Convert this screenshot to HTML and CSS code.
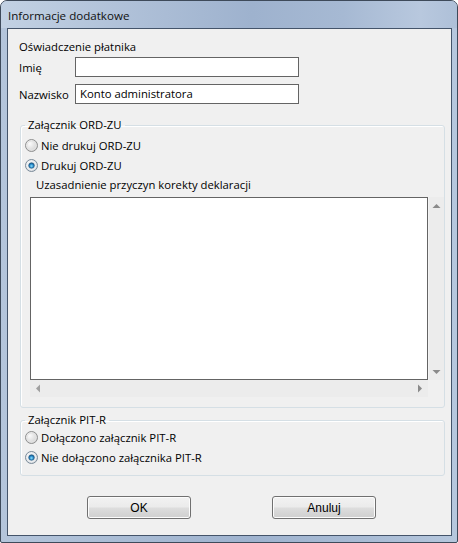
FILE: index.html
```html
<!DOCTYPE html>
<html lang="pl">
<head>
<meta charset="utf-8">
<title>Informacje dodatkowe</title>
<link rel="stylesheet" href="styles.css">
</head>
<body>
<div class="window">
  <div class="titlebar"><span class="title">Informacje dodatkowe</span></div>
  <div class="client">
    <div class="section-title">Oświadczenie płatnika</div>
    <div class="field-row">
      <span class="field-label">Imię</span>
      <div class="input"></div>
    </div>
    <div class="field-row field-row-2">
      <span class="field-label">Nazwisko</span>
      <div class="input">Konto administratora</div>
    </div>

    <fieldset class="group group-ord">
      <legend class="group-legend">Załącznik ORD-ZU</legend>
      <div class="radio-row radio-first">
        <svg class="radio" width="13" height="13" viewBox="0 0 13 13">
          <defs>
            <radialGradient id="rg1" cx="0.35" cy="0.35" r="0.75">
              <stop offset="0" stop-color="#fbfbfb"/>
              <stop offset="1" stop-color="#cfcfcf"/>
            </radialGradient>
          </defs>
          <circle cx="6.5" cy="6.5" r="6" fill="url(#rg1)" stroke="#8e8f8f" stroke-width="1"/>
          <circle cx="6.5" cy="6.5" r="4.5" fill="none" stroke="#e4e4e4" stroke-width="1"/>
        </svg>
        <span>Nie drukuj ORD-ZU</span>
      </div>
      <div class="radio-row">
        <svg class="radio" width="13" height="13" viewBox="0 0 13 13">
          <defs>
            <radialGradient id="rg2" cx="0.35" cy="0.35" r="0.75">
              <stop offset="0" stop-color="#fbfbfb"/>
              <stop offset="1" stop-color="#d2d6da"/>
            </radialGradient>
            <radialGradient id="dot1" cx="0.5" cy="0.6" r="0.6">
              <stop offset="0" stop-color="#8fe0fb"/>
              <stop offset="0.55" stop-color="#2a8ccc"/>
              <stop offset="1" stop-color="#0f4a78"/>
            </radialGradient>
          </defs>
          <circle cx="6.5" cy="6.5" r="6" fill="url(#rg2)" stroke="#7a8b99" stroke-width="1"/>
          <circle cx="6.5" cy="6.5" r="4.3" fill="none" stroke="#eef1f4" stroke-width="1"/>
          <circle cx="6.5" cy="6.5" r="2.8" fill="url(#dot1)" stroke="#24587f" stroke-width="0.6"/>
        </svg>
        <span>Drukuj ORD-ZU</span>
      </div>
      <div class="textarea-label">Uzasadnienie przyczyn korekty deklaracji</div>
      <div class="scroll-pane">
        <div class="pane-top">
          <div class="text-box"></div>
          <div class="vscroll">
            <svg class="arrow" width="9" height="6" viewBox="0 0 9 6"><path d="M0.5 5 L4.5 1 L8.5 5 Z" fill="#8a8a8a"/></svg>
            <svg class="arrow" width="9" height="6" viewBox="0 0 9 6"><path d="M0.5 1 L4.5 5 L8.5 1 Z" fill="#8a8a8a"/></svg>
          </div>
        </div>
        <div class="hscroll">
          <svg class="arrow" width="6" height="9" viewBox="0 0 6 9"><path d="M5 0.5 L1 4.5 L5 8.5 Z" fill="#a0a0a0"/></svg>
          <svg class="arrow" width="6" height="9" viewBox="0 0 6 9"><path d="M1 0.5 L5 4.5 L1 8.5 Z" fill="#8a8a8a"/></svg>
        </div>
      </div>
    </fieldset>

    <fieldset class="group group-pit">
      <legend class="group-legend">Załącznik PIT-R</legend>
      <div class="radio-row radio-first-pit">
        <svg class="radio" width="13" height="13" viewBox="0 0 13 13">
          <defs>
            <radialGradient id="rg3" cx="0.35" cy="0.35" r="0.75">
              <stop offset="0" stop-color="#fbfbfb"/>
              <stop offset="1" stop-color="#cfcfcf"/>
            </radialGradient>
          </defs>
          <circle cx="6.5" cy="6.5" r="6" fill="url(#rg3)" stroke="#8e8f8f" stroke-width="1"/>
          <circle cx="6.5" cy="6.5" r="4.5" fill="none" stroke="#e4e4e4" stroke-width="1"/>
        </svg>
        <span>Dołączono załącznik PIT-R</span>
      </div>
      <div class="radio-row">
        <svg class="radio" width="13" height="13" viewBox="0 0 13 13">
          <defs>
            <radialGradient id="rg4" cx="0.35" cy="0.35" r="0.75">
              <stop offset="0" stop-color="#fbfbfb"/>
              <stop offset="1" stop-color="#d2d6da"/>
            </radialGradient>
            <radialGradient id="dot2" cx="0.5" cy="0.6" r="0.6">
              <stop offset="0" stop-color="#8fe0fb"/>
              <stop offset="0.55" stop-color="#2a8ccc"/>
              <stop offset="1" stop-color="#0f4a78"/>
            </radialGradient>
          </defs>
          <circle cx="6.5" cy="6.5" r="6" fill="url(#rg4)" stroke="#7a8b99" stroke-width="1"/>
          <circle cx="6.5" cy="6.5" r="4.3" fill="none" stroke="#eef1f4" stroke-width="1"/>
          <circle cx="6.5" cy="6.5" r="2.8" fill="url(#dot2)" stroke="#24587f" stroke-width="0.6"/>
        </svg>
        <span>Nie dołączono załącznika PIT-R</span>
      </div>
    </fieldset>

    <div class="buttons">
      <button class="btn" type="button">OK</button>
      <button class="btn" type="button">Anuluj</button>
    </div>
  </div>
</div>
</body>
</html>
```

FILE: styles.css
```css
* { box-sizing: border-box; }

html, body {
  margin: 0;
  padding: 0;
  background: #ffffff;
}

body {
  font-family: "Open Sans", "Liberation Sans", sans-serif;
  font-size: 11.3px;
  color: #000000;
}

.window {
  width: 458px;
  height: 543px;
  border: 1px solid #3e4a5a;
  border-radius: 7px 7px 2px 2px;
  background: linear-gradient(90deg, #b4c5db 0%, #a8bbd4 30%, #9fb3cf 55%, #a9bcd5 80%, #b6c7dd 100%);
  display: flex;
  flex-direction: column;
  overflow: hidden;
}

.titlebar {
  height: 27px;
  flex: none;
  display: flex;
  align-items: center;
  padding-left: 7px;
  padding-top: 2px;
  background: linear-gradient(90deg, #c2d1e3 0%, #b1c2d9 25%, #9eb2ce 55%, #a6b9d3 75%, #b8c8de 92%, #aec0d8 100%);
}

.title {
  font-family: "Open Sans", "Liberation Sans", sans-serif;
  font-size: 11.6px;
  color: #111111;
}

.client {
  flex: none;
  height: 508px;
  margin: 0 5px 6px 6px;
  border: 1px solid #44546a;
  background: #f0f0f0;
  display: flex;
  flex-direction: column;
}

.section-title {
  margin-top: 10px;
  padding-left: 11px;
  line-height: 16px;
}

.field-row {
  display: flex;
  align-items: center;
  margin-top: 2px;
  padding-left: 11px;
  height: 20px;
}

.field-row-2 {
  margin-top: 7px;
}

.field-label {
  width: 56px;
  flex: none;
}

.input {
  width: 224px;
  height: 20px;
  border: 1px solid #646464;
  background: #ffffff;
  padding-left: 4px;
  line-height: 18px;
}

.group {
  margin: 13px 6px 0 12px;
  padding: 0;
  border: 1px solid #d5dfe5;
  border-radius: 3px;
  box-shadow: inset 1px 1px 0 #ffffff;
  min-width: 0;
}

.group-legend {
  margin-left: 4px;
  padding: 0 3px;
  line-height: 16px;
  height: 16px;
}

.group-pit {
  margin-top: 4px;
  padding-bottom: 8px;
}

.radio-row {
  display: flex;
  align-items: center;
  height: 20px;
  padding-left: 4px;
}

.radio-first {
  margin-top: 2px;
}

.radio-first-pit {
  margin-top: -1px;
}

.radio {
  flex: none;
  margin-right: 3px;
}

.textarea-label {
  margin-top: 2px;
  padding-left: 15px;
  line-height: 16px;
}

.scroll-pane {
  margin: 4px 0 10px 9px;
  display: flex;
  flex-direction: column;
}

.pane-top {
  display: flex;
  height: 183px;
}

.text-box {
  width: 398px;
  height: 183px;
  border: 1px solid #646464;
  background: #ffffff;
  flex: none;
}

.vscroll {
  flex: 1;
  background: #ececec;
  border-left: 1px solid #f4f4f4;
  display: flex;
  flex-direction: column;
  justify-content: space-between;
  align-items: center;
  padding: 6px 0 5px;
}

.hscroll {
  width: 398px;
  height: 17px;
  background: #ececec;
  display: flex;
  justify-content: space-between;
  align-items: center;
  padding: 0 5px 0 5px;
}

.arrow {
  display: block;
}

.buttons {
  display: flex;
  gap: 81px;
  margin-top: 20px;
  padding-left: 79px;
}

.btn {
  width: 104px;
  height: 23px;
  border: 1px solid #707070;
  border-radius: 3px;
  background: linear-gradient(180deg, #f2f2f2 0%, #ebebeb 48%, #dddddd 52%, #cfcfcf 100%);
  box-shadow: inset 0 0 0 1px #fcfcfc;
  font-family: "Liberation Sans", Arial, sans-serif;
  font-size: 12px;
  color: #000000;
  padding: 0;
}
```
